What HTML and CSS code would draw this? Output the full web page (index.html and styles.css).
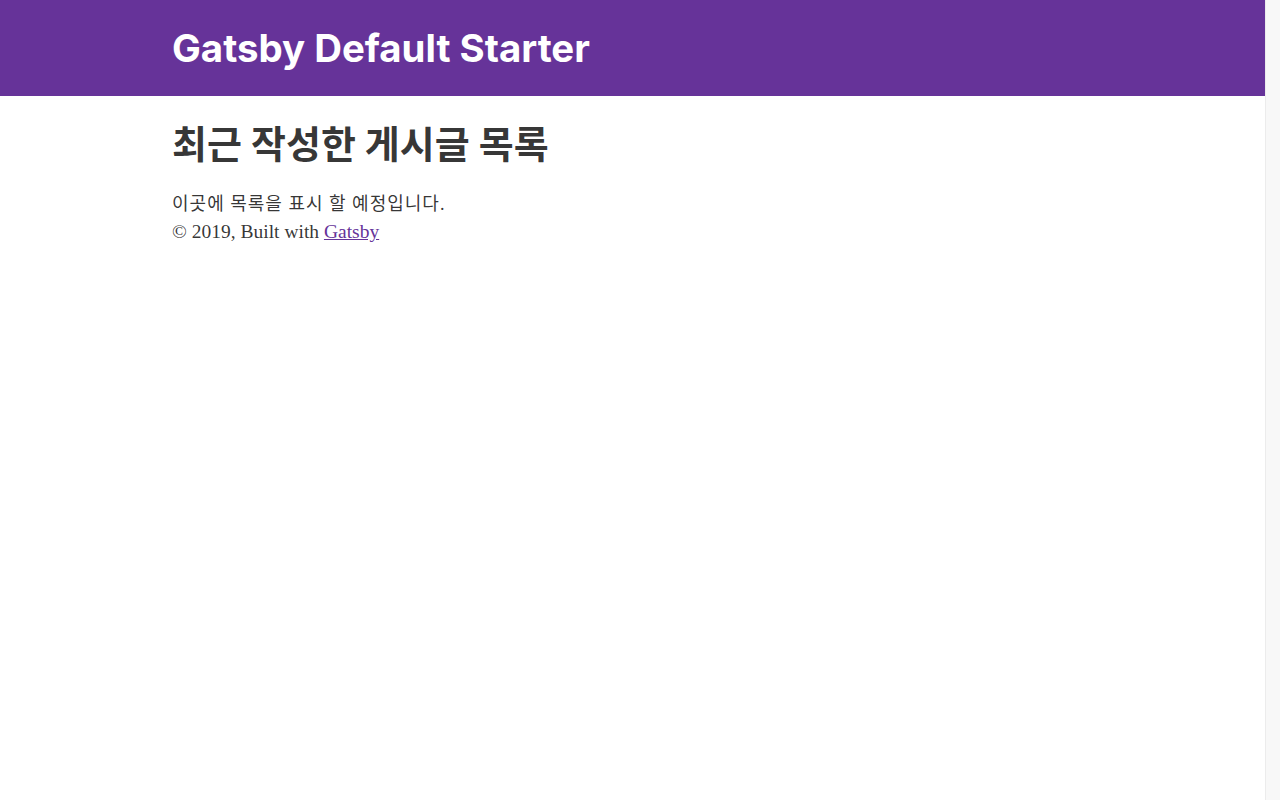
FILE: index.html
```html
<!DOCTYPE html>
<html lang="ko">
<head>
<meta charset="utf-8">
<title>Gatsby Default Starter</title>
<link rel="stylesheet" href="styles.css">
</head>
<body>
<div class="page">
  <header class="site-header">
    <div class="header-inner">
      <h1 class="site-title"><a href="#">Gatsby Default Starter</a></h1>
    </div>
  </header>
  <div class="container">
    <main>
      <h1 class="page-title">최근 작성한 게시글 목록</h1>
      <div class="text ko">이곳에 목록을 표시 할 예정입니다.</div>
    </main>
    <footer class="text en">© 2019, Built with <a href="#">Gatsby</a></footer>
  </div>
</div>
<div class="scrollbar"></div>
</body>
</html>
```

FILE: styles.css
```css
*, *::before, *::after {
  box-sizing: border-box;
}
html {
  font-size: 18px;
}
body {
  margin: 0;
  display: flex;
  min-height: 100vh;
  font-family: "Liberation Serif", "Noto Sans CJK KR", serif;
  color: hsla(0, 0%, 0%, 0.8);
}
.page {
  flex: 1;
  min-width: 0;
}
.scrollbar {
  width: 15px;
  flex: none;
  background: #f8f8f8;
  border-left: 1px solid #ececec;
}
.site-header {
  background: #663399;
  margin-bottom: 26px;
}
.header-inner {
  max-width: 960px;
  margin: 0 auto;
  padding: 26px 19.575px;
}
.site-title {
  margin: 0;
  font-family: Inter, "Noto Sans", sans-serif;
  font-weight: 700;
  font-size: 38.4px;
  line-height: 44px;
}
.site-title a {
  color: #fff;
  text-decoration: none;
}
.container {
  max-width: 960px;
  margin: 0 auto;
  padding: 0 19.575px 26px;
}
.page-title {
  margin: 0 0 24px;
  font-family: Inter, "Noto Sans CJK KR", sans-serif;
  font-weight: 700;
  font-size: 38px;
  line-height: 44px;
  color: hsla(0, 0%, 0%, 0.8);
}
.text {
  font-size: 18px;
  line-height: 28px;
}
.ko {
  letter-spacing: 1px;
}
.en {
  font-size: 19.5px;
}
.text a {
  color: #663399;
}
```
